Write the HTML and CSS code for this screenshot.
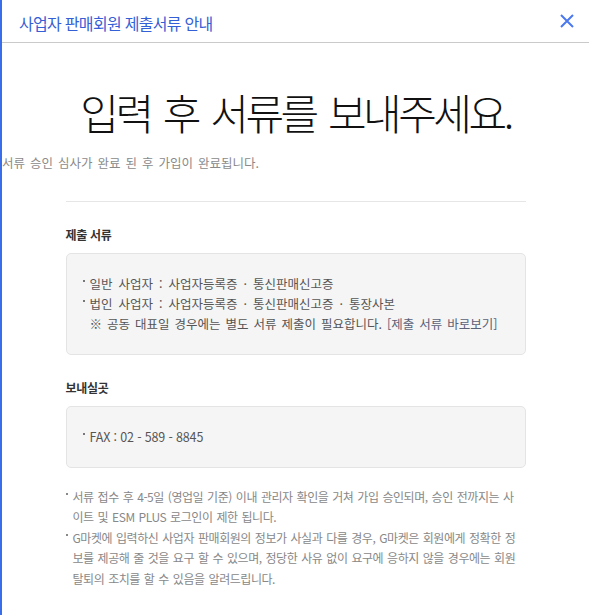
FILE: index.html
```html
<!DOCTYPE html>
<html lang="ko">
<head>
<meta charset="utf-8">
<title>사업자 판매회원 제출서류 안내</title>
<link rel="stylesheet" href="styles.css">
</head>
<body>
<div class="page">
  <header class="head">
    <h1 class="head-title">사업자 판매회원 제출서류 안내</h1>
    <button class="close" type="button" aria-label="닫기">
      <svg width="14" height="14" viewBox="0 0 14 14"><path d="M1 1L13 13M13 1L1 13" stroke="#4a78ee" stroke-width="2" fill="none"/></svg>
    </button>
  </header>

  <h2 class="hero">입력 후 서류를 보내주세요.</h2>
  <p class="sub">서류 승인 심사가 완료 된 후 가입이 완료됩니다.</p>

  <div class="content">
    <hr class="divider">

    <h3 class="label">제출 서류</h3>
    <div class="box">
      <p class="item">일반 사업자 : 사업자등록증 · 통신판매신고증</p>
      <p class="item">법인 사업자 : 사업자등록증 · 통신판매신고증 · 통장사본</p>
      <p class="item note-line">※ 공동 대표일 경우에는 별도 서류 제출이 필요합니다. <a class="link" href="#">[제출 서류 바로보기]</a></p>
    </div>

    <h3 class="label label-second">보내실곳</h3>
    <div class="box">
      <p class="item item-fax">FAX : 02 - 589 - 8845</p>
    </div>

    <ul class="notes">
      <li>서류 접수 후 4-5일 (영업일 기준) 이내 관리자 확인을 거쳐 가입 승인되며, 승인 전까지는 사<br>이트 및 ESM PLUS 로그인이 제한 됩니다.</li>
      <li>G마켓에 입력하신 사업자 판매회원의 정보가 사실과 다를 경우, G마켓은 회원에게 정확한 정<br>보를 제공해 줄 것을 요구 할 수 있으며, 정당한 사유 없이 요구에 응하지 않을 경우에는 회원<br>탈퇴의 조치를 할 수 있음을 알려드립니다.</li>
    </ul>
  </div>
</div>
</body>
</html>
```

FILE: styles.css
```css
* { box-sizing: border-box; }

html, body {
  margin: 0;
  padding: 0;
  background: #fff;
}

body {
  font-family: "Noto Sans CJK KR", "Noto Sans", sans-serif;
  color: #333;
}

.page {
  border-left: 2px solid #3a6ee8;
  min-height: 615px;
}

.head {
  height: 43px;
  border-bottom: 1px solid #cacaca;
  display: flex;
  align-items: center;
  justify-content: space-between;
  padding: 0 15px 0 17px;
}

.head-title {
  margin: 0;
  font-size: 16px;
  font-weight: 400;
  letter-spacing: -0.7px;
  color: #3360d6;
  line-height: 1;
  padding-top: 4px;
}

.close {
  border: 0;
  background: none;
  padding: 0;
  width: 14px;
  height: 14px;
  display: flex;
  margin-top: 0;
}

.hero {
  margin: 41px 0 0;
  text-align: center;
  font-size: 42px;
  font-weight: 300;
  letter-spacing: -3.5px;
  word-spacing: 4px;
  line-height: 56px;
  color: #111;
}

.sub {
  margin: 13px 0 0;
  font-size: 12.5px;
  letter-spacing: 0;
  word-spacing: 1.5px;
  line-height: 20px;
  color: #8a8a8a;
}

.content {
  width: 460px;
  margin: 0 auto;
}

.divider {
  margin: 28px 0 0;
  border: 0;
  border-top: 1px solid #e6e6e6;
  height: 0;
}

.label {
  margin: 23px 0 8px;
  font-size: 12px;
  font-weight: 700;
  letter-spacing: -0.3px;
  line-height: 20px;
  color: #333;
}

.label-second {
  margin-top: 23px;
}

.box {
  background: #f5f5f5;
  border: 1px solid #e4e4e4;
  border-radius: 5px;
  padding: 20px 15px;
}

.item {
  margin: 0;
  position: relative;
  padding-left: 8px;
  font-size: 12.5px;
  letter-spacing: 0;
  word-spacing: 2.5px;
  line-height: 20px;
  color: #555;
}

.item::before {
  content: "";
  position: absolute;
  left: 1px;
  top: 6px;
  width: 2px;
  height: 2px;
  background: #777;
}

.item-fax {
  word-spacing: 0;
  letter-spacing: -0.15px;
}

.note-line {
  word-spacing: 1.5px;
}

.note-line::before {
  display: none;
}

.link {
  color: #5a6178;
  text-decoration: none;
}

.notes {
  list-style: none;
  margin: 19px 0 0;
  padding: 0 0 0 7px;
}

.notes li {
  position: relative;
  font-size: 12px;
  letter-spacing: -0.45px;
  word-spacing: 1px;
  line-height: 20.4px;
  color: #888;
}

.notes li::before {
  content: "";
  position: absolute;
  left: -7px;
  top: 6px;
  width: 2px;
  height: 2px;
  background: #888;
}
```
